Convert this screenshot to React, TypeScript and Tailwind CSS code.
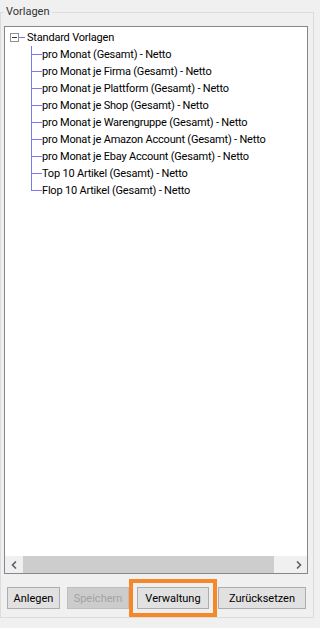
import React from "react";

const items = [
  "pro Monat (Gesamt) - Netto",
  "pro Monat je Firma (Gesamt) - Netto",
  "pro Monat je Plattform (Gesamt) - Netto",
  "pro Monat je Shop (Gesamt) - Netto",
  "pro Monat je Warengruppe (Gesamt) - Netto",
  "pro Monat je Amazon Account (Gesamt) - Netto",
  "pro Monat je Ebay Account (Gesamt) - Netto",
  "Top 10 Artikel (Gesamt) - Netto",
  "Flop 10 Artikel (Gesamt) - Netto",
];

const font = { fontFamily: '"Segoe UI", Roboto, "Liberation Sans", sans-serif' };

function Chevron({ dir }: { dir: "left" | "right" }) {
  return (
    <svg width="6" height="8" viewBox="0 0 6 8">
      <polyline
        points={dir === "left" ? "5,0.5 1.5,4 5,7.5" : "1,0.5 4.5,4 1,7.5"}
        fill="none"
        stroke="#606060"
        strokeWidth="1.6"
      />
    </svg>
  );
}

function TreeRow({ label, last }: { label: string; last: boolean }) {
  return (
    <div className="flex h-[17px] items-center">
      <div className="w-[26px] shrink-0" />
      {/* connector: vertical segment + stub */}
      <div className="relative h-full w-[11px] shrink-0">
        <div
          className={
            last
              ? "absolute left-0 top-0 h-[9px] border-l border-[#7a7af0]"
              : "absolute left-0 top-0 h-full border-l border-[#7a7af0]"
          }
        />
        <div className="absolute left-0 top-[8px] w-[11px] border-t border-[#7a7af0]" />
      </div>
      <span className="whitespace-nowrap tracking-[-0.2px] text-black">{label}</span>
    </div>
  );
}

export default function App() {
  return (
    <div
      className="h-[628px] w-[320px] bg-[#f0f0f0] pt-[12px] text-[11px] leading-none"
      style={font}
    >
      {/* Group box */}
      <div className="relative h-[606px] w-[314px] border border-[#dcdcdc]">
        <span className="absolute -top-[7px] left-[3px] bg-[#f0f0f0] px-[2px] text-[#333]">
          Vorlagen
        </span>

        <div className="pl-[3px] pt-[13px]">
          {/* Tree view */}
          <div className="flex h-[548px] w-[304px] flex-col border border-[#828790] bg-white">
            <div className="flex-1 pt-[2px]">
              <div className="flex h-[17px] items-center">
                <div className="w-[5px] shrink-0" />
                <div className="flex h-[9px] w-[9px] shrink-0 items-center justify-center border border-[#919191] bg-white">
                  <div className="w-[5px] border-t border-[#333]" />
                </div>
                <div className="w-[6px] shrink-0 border-t border-[#7a7af0]" />
                <div className="w-[2px] shrink-0" />
                <span className="whitespace-nowrap tracking-[-0.2px] text-black">
                  Standard Vorlagen
                </span>
              </div>
              {items.map((label, i) => (
                <TreeRow key={label} label={label} last={i === items.length - 1} />
              ))}
            </div>

            {/* Horizontal scrollbar */}
            <div className="flex h-[17px] items-center bg-[#f0f0f0]">
              <div className="flex h-full w-[17px] items-center justify-center">
                <Chevron dir="left" />
              </div>
              <div className="flex h-full flex-1 items-center pr-[16px]">
                <div className="ml-[1px] h-full w-[251px] bg-[#cdcdcd]" />
              </div>
              <div className="flex h-full w-[17px] items-center justify-center">
                <Chevron dir="right" />
              </div>
            </div>
          </div>

          {/* Buttons */}
          <div className="mt-[5px] flex items-center pl-[3px]">
            <button className="h-[22px] w-[53px] border border-[#adadad] bg-[#e1e1e1] text-black">
              Anlegen
            </button>
            <button
              disabled
              className="ml-[7px] h-[22px] w-[62px] border border-[#bfbfbf] bg-[#cccccc] text-[#a3a3a3]"
            >
              Speichern
            </button>
            <div className="border-4 border-[#f5892a] p-[4px]">
              <button className="flex h-[22px] w-[72px] items-center justify-center border border-[#adadad] bg-[#e1e1e1] text-black">
                Verwaltung
              </button>
            </div>
            <button className="ml-[1px] h-[22px] w-[88px] border border-[#adadad] bg-[#e1e1e1] text-black">
              Zurücksetzen
            </button>
          </div>
        </div>
      </div>
    </div>
  );
}
